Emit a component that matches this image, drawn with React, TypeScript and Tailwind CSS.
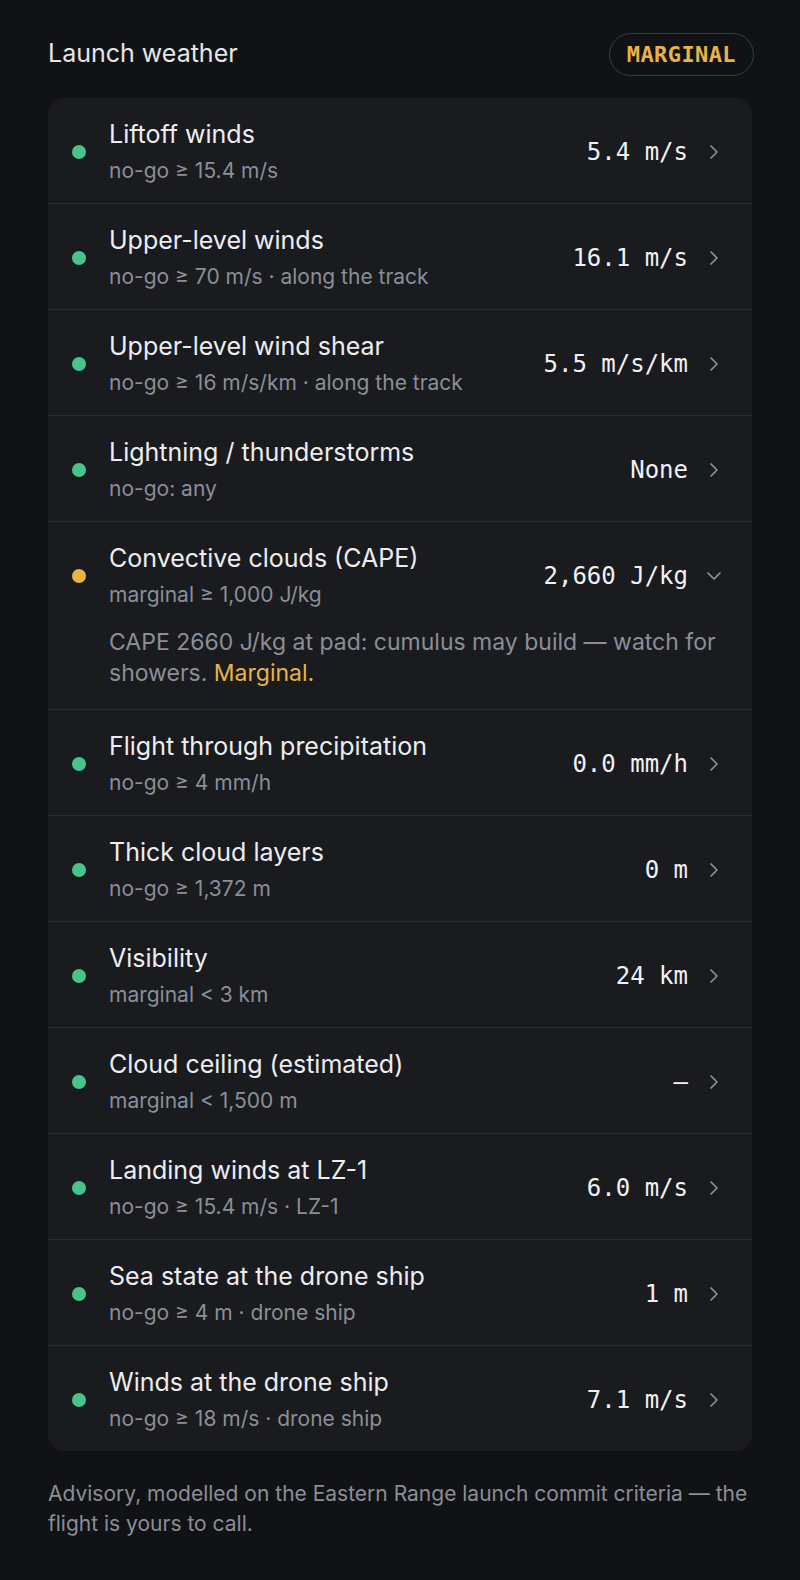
import React from "react";

type Row = {
  title: string;
  sub: string;
  value: string;
  status: "go" | "marginal";
  expanded?: boolean;
};

const rows: Row[] = [
  { title: "Liftoff winds", sub: "no-go ≥ 15.4 m/s", value: "5.4 m/s", status: "go" },
  { title: "Upper-level winds", sub: "no-go ≥ 70 m/s · along the track", value: "16.1 m/s", status: "go" },
  { title: "Upper-level wind shear", sub: "no-go ≥ 16 m/s/km · along the track", value: "5.5 m/s/km", status: "go" },
  { title: "Lightning / thunderstorms", sub: "no-go: any", value: "None", status: "go" },
  { title: "Convective clouds (CAPE)", sub: "marginal ≥ 1,000 J/kg", value: "2,660 J/kg", status: "marginal", expanded: true },
  { title: "Flight through precipitation", sub: "no-go ≥ 4 mm/h", value: "0.0 mm/h", status: "go" },
  { title: "Thick cloud layers", sub: "no-go ≥ 1,372 m", value: "0 m", status: "go" },
  { title: "Visibility", sub: "marginal < 3 km", value: "24 km", status: "go" },
  { title: "Cloud ceiling (estimated)", sub: "marginal < 1,500 m", value: "—", status: "go" },
  { title: "Landing winds at LZ-1", sub: "no-go ≥ 15.4 m/s · LZ-1", value: "6.0 m/s", status: "go" },
  { title: "Sea state at the drone ship", sub: "no-go ≥ 4 m · drone ship", value: "1 m", status: "go" },
  { title: "Winds at the drone ship", sub: "no-go ≥ 18 m/s · drone ship", value: "7.1 m/s", status: "go" },
];

function Chevron({ down }: { down?: boolean }) {
  return (
    <svg width="24" height="24" viewBox="0 0 24 24" fill="none" stroke="#8b8e96" strokeWidth="1.75" strokeLinecap="round" strokeLinejoin="round" className="shrink-0">
      {down ? <path d="m6 9 6 6 6-6" /> : <path d="m9 18 6-6-6-6" />}
    </svg>
  );
}

function WeatherRow({ row, first }: { row: Row; first: boolean }) {
  return (
    <div className={first ? "" : "border-t border-[#2a2b30]"}>
      <div className="flex items-center pl-6 pr-[26px] pt-5 pb-[18px]">
        <div
          className={
            "w-[14px] h-[14px] rounded-full shrink-0 " +
            (row.status === "go" ? "bg-[#46c48a]" : "bg-[#e8b443]")
          }
        />
        <div className="flex-1 ml-[23px] min-w-0">
          <div className="text-[25px] leading-[32px] text-[#ededef]">{row.title}</div>
          <div className="text-[21px] leading-[28px] mt-[7px] text-[#8b8e96]">{row.sub}</div>
        </div>
        <div className="font-['DejaVu_Sans_Mono',monospace] text-[24px] leading-[32px] text-[#f1f1f3] mr-[14px]">
          {row.value}
        </div>
        <Chevron down={row.expanded} />
      </div>
      {row.expanded && (
        <div className="pl-[61px] pr-[26px] pb-5 text-[23px] leading-[31px] text-[#8b8e96]">
          CAPE 2660 J/kg at pad: cumulus may build — watch for showers.{" "}
          <span className="text-[#e8b443]">Marginal.</span>
        </div>
      )}
    </div>
  );
}

export default function App() {
  return (
    <div className="min-h-[1580px] bg-[#111215] px-12 pt-[33px] font-['Inter',sans-serif]">
      <div className="flex items-center justify-between h-[42px]">
        <div className="text-[25px] text-[#e6e6e8]">Launch weather</div>
        <div className="h-[43px] -mr-[2px] px-[17px] rounded-full border-[1.5px] border-[#3b3c40] flex items-center font-['DejaVu_Sans_Mono',monospace] font-bold text-[22px] tracking-[0.4px] text-[#e8b443]">
          MARGINAL
        </div>
      </div>
      <div className="mt-[23px] rounded-2xl bg-[#1a1b1f] overflow-hidden">
        {rows.map((r, i) => (
          <WeatherRow key={r.title} row={r} first={i === 0} />
        ))}
      </div>
      <p className="mt-7 text-[21px] leading-[30px] text-[#8b8e96]">
        Advisory, modelled on the Eastern Range launch commit criteria — the flight is yours to call.
      </p>
    </div>
  );
}
